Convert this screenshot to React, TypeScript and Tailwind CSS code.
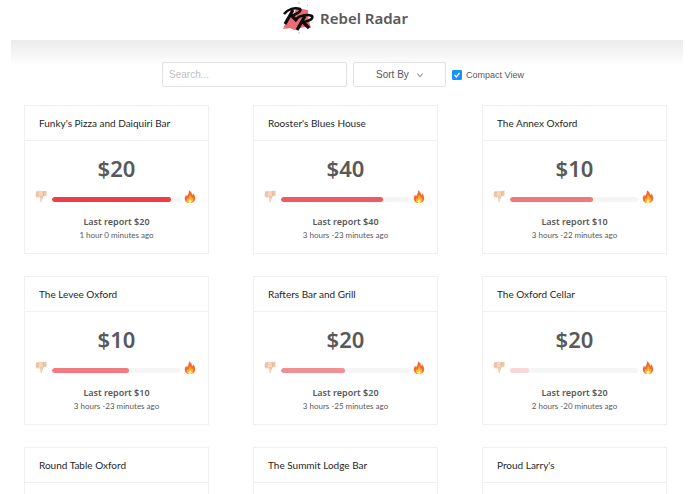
type Venue = {
  name: string;
  price?: number;
  rating?: number;
  barColor?: string;
  reported?: string;
};

const venues: Venue[] = [
  { name: "Funky's Pizza and Daiquiri Bar", price: 20, rating: 93, barColor: "bg-[#ee3d48]", reported: "1 hour 0 minutes ago" },
  { name: "Rooster's Blues House", price: 40, rating: 80, barColor: "bg-[#f0595f]", reported: "3 hours -23 minutes ago" },
  { name: "The Annex Oxford", price: 10, rating: 65, barColor: "bg-[#f1777d]", reported: "3 hours -22 minutes ago" },
  { name: "The Levee Oxford", price: 10, rating: 60, barColor: "bg-[#f17b80]", reported: "3 hours -23 minutes ago" },
  { name: "Rafters Bar and Grill", price: 20, rating: 50, barColor: "bg-[#f28f94]", reported: "3 hours -25 minutes ago" },
  { name: "The Oxford Cellar", price: 20, rating: 15, barColor: "bg-[#f9d6d8]", reported: "2 hours -20 minutes ago" },
  { name: "Round Table Oxford" },
  { name: "The Summit Lodge Bar" },
  { name: "Proud Larry's" },
];

const Logo = () => (
  <svg viewBox="0 0 32 34" className="h-[34px] w-8" aria-hidden="true">
    <path d="M1 28 L4 21 L5 17 L12 13 L14 8 L20 8 L26 9 L26 15 L27 20 L29 27 L22 26 L12 29 L8 27Z" fill="#ee6a74" />
    <path d="M16.5 1 L17.5 3 M17 31 V33 M25 5 L26 4" stroke="#c9b5b8" strokeWidth="1" />
    <g fill="none" stroke="#0d0d0d" strokeLinejoin="round">
      <path d="M2 13 C6 8 13 6 18 8 C20 10 14 14 8 15" strokeWidth="2.6" />
      <path d="M11 9 L3 23 M9 14 L15 20" strokeWidth="3.2" />
      <path d="M14 18 C18 14 26 13 30 15 C32 18 25 21 20 21" strokeWidth="2.6" />
      <path d="M23 15 L15 29 M20 20 L27 27" strokeWidth="3.2" />
    </g>
  </svg>
);

const ThumbsDown = () => (
  <svg viewBox="0 0 12 13" className="h-[13px] w-3 shrink-0" aria-hidden="true">
    <path d="M1.2 1.3 Q3 .6 5.5 .8 L8 1.2 L8.6 5.6 Q7.4 7 7.4 8.4 L7 11.6 Q6.2 12.8 5.4 11.8 Q4.8 10.2 5.2 7.4 L1.8 7.4 Q.2 7 .7 5.8 Q0 5 .6 4 Q.2 3 1.2 2.4Z" fill="#f7d5bc" />
    <path d="M8 1 L11.5 .8 V5.8 L8.4 6Z" fill="#efc5a5" />
    <path d="M1 3.9 H4 M1 5.7 H4 M1.4 2.3 H4 M5.2 7.4 Q6.2 7.2 6.5 6 M8.1 1.2 L8.5 5.6 Q7.4 7 7.3 9" fill="none" stroke="#d8a584" strokeWidth=".6" />
  </svg>
);

const Fire = () => (
  <svg viewBox="0 0 12 13" className="h-[13px] w-3 shrink-0" aria-hidden="true">
    <path d="M6 13 C2.5 13 .7 11 .8 8.5 C.9 6.8 1.7 5.7 2 4.8 Q2.8 5.4 2.9 6.5 C4 5 5.2 3 4.9 .3 C7 1.3 8 3.2 8.2 5.2 Q9 4.7 9 3.2 C10.6 5 11.4 6.8 11.2 8.8 C11 11.4 9 13 6 13Z" fill="#f36a2c" />
    <path d="M6 13 C3.7 13 2.5 11.6 2.7 9.8 Q3 8.7 3.7 8.1 Q4 8.6 4.4 8.9 Q5.8 7.5 5.8 5 C7.3 6 7.7 7.4 7.7 8.6 Q8.4 8.2 8.6 7.5 C9.4 8.8 9.5 9.8 9.1 10.9 Q8.4 13 6 13Z" fill="#fcb72c" />
    <path d="M6 13 Q4 12.8 4.2 11.2 Q5.5 10.8 6 9 Q7.9 10.5 7.7 11.8 Q7.2 13 6 13Z" fill="#fff09a" />
  </svg>
);

const VenueCard = ({ venue }: { venue: Venue }) => (
  <article className="min-h-[149px] border border-[#f0f0f0] bg-white">
    <h2 className="truncate border-b border-[#f0f0f0] px-3.5 py-2 font-['Lato','Noto_Sans',sans-serif] text-[10px] leading-[18px] text-[#262626]">
      {venue.name}
    </h2>
    {venue.price !== undefined && (
      <div className="px-2.5 pt-[11px] text-center text-[#595959]">
        <p className="text-[22px] leading-8 font-semibold">${venue.price}</p>
        <div className="mt-1.5 flex items-center gap-1 pr-0.5">
          <ThumbsDown />
          <div className="flex-1 pt-1.5 pl-px">
            <div className="h-[5px] overflow-hidden rounded-full bg-[#f5f5f5]">
              <div className={`h-full rounded-full ${venue.barColor}`} style={{ width: `${venue.rating}%` }}></div>
            </div>
          </div>
          <Fire />
        </div>
        <p className="mt-3 text-[9px] leading-[14px] font-semibold">Last report ${venue.price}</p>
        <p className="font-['Lato','Noto_Sans',sans-serif] text-[8px] leading-3">{venue.reported}</p>
      </div>
    )}
  </article>
);

const App = () => {
  return (
    <div className="h-screen overflow-hidden bg-white font-['Noto_Sans','Open_Sans',sans-serif]">
      <header className="mr-3 ml-[11px] flex h-10 items-center justify-center gap-1.5 pr-1 pb-1">
        <Logo />
        <h1 className="text-[15px] leading-6 font-semibold text-[#595959]">Rebel Radar</h1>
      </header>
      <main className="mr-3 ml-[11px] bg-linear-to-b from-[#ebebeb] to-white to-[26px] pt-[22px]">
        <form className="flex items-center justify-center gap-1.5 pr-2 font-['Liberation_Sans',sans-serif]">
          <input
            type="text"
            aria-label="Search"
            placeholder="Search..."
            className="h-[25px] w-[185px] rounded-xs border border-[#e2e2e2] bg-white px-1.5 text-[10px] text-[#595959] outline-none placeholder:text-[#bfbfbf]"
          />
          <div className="relative flex">
            <select
              aria-label="Sort By"
              className="h-[25px] w-[93px] appearance-none rounded-xs border border-[#e2e2e2] bg-white pl-[22px] text-[10px] text-[#595959] outline-none"
            >
              <option>Sort By</option>
            </select>
            <svg viewBox="0 0 8 8" className="pointer-events-none absolute top-[9px] right-[22px] size-2" aria-hidden="true">
              <path d="M1.5 2.5 L4 5.8 L6.5 2.5" fill="none" stroke="#777" strokeWidth="1" />
            </svg>
          </div>
          <label className="flex items-center gap-1 text-[9px] leading-4 text-[#595959]">
            <span className="relative flex size-[10px]">
              <input
                type="checkbox"
                defaultChecked
                className="size-[10px] appearance-none rounded-[1px] border border-[#1890ff] checked:bg-[#1890ff]"
              />
              <svg viewBox="0 0 10 10" className="pointer-events-none absolute inset-0" aria-hidden="true">
                <path d="M2.5 5 L4.3 6.9 L7.5 3" fill="none" stroke="#fff" strokeWidth="1.3" />
              </svg>
            </span>
            Compact View
          </label>
        </form>
        <section className="mt-[18px] grid grid-cols-3 gap-x-11 gap-y-[22px] pr-4 pl-[13px]">
          {venues.map((venue) => (
            <VenueCard key={venue.name} venue={venue} />
          ))}
        </section>
      </main>
    </div>
  );
};

export default App;
